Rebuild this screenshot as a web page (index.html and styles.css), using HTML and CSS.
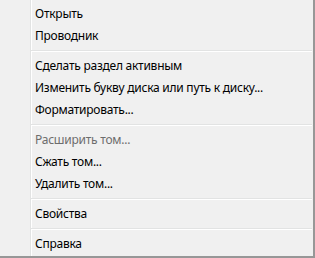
FILE: index.html
```html
<!DOCTYPE html>
<html lang="ru">
<head>
<meta charset="utf-8">
<link rel="stylesheet" href="styles.css">
</head>
<body>
<div class="menu">
  <div class="item">Открыть</div>
  <div class="item">Проводник</div>
  <div class="sep"></div>
  <div class="item">Сделать раздел активным</div>
  <div class="item">Изменить букву диска или путь к диску...</div>
  <div class="item">Форматировать...</div>
  <div class="sep"></div>
  <div class="item disabled">Расширить том...</div>
  <div class="item">Сжать том...</div>
  <div class="item">Удалить том...</div>
  <div class="sep"></div>
  <div class="item">Свойства</div>
  <div class="sep"></div>
  <div class="item">Справка</div>
</div>
</body>
</html>
```

FILE: styles.css
```css
html, body {
  margin: 0;
  padding: 0;
  background: #f0f0f0;
}
.menu {
  box-sizing: border-box;
  width: 315px;
  height: 258px;
  display: flex;
  flex-direction: column;
  padding-top: 3px;
  border-right: 2px solid #979797;
  border-bottom: 2px solid #979797;
  background: linear-gradient(to right, #f0f0f0 0 30px, #e2e3e3 30px 31px, #ffffff 31px 32px, #f0f0f0 32px);
  font-family: "Noto Sans", "Open Sans", sans-serif;
  font-size: 12px;
  letter-spacing: -0.25px;
  color: #000;
}
.item {
  height: 22px;
  line-height: 22px;
  padding-left: 35px;
  white-space: nowrap;
}
.item.disabled {
  color: #6d6d6d;
}
.sep {
  height: 8px;
  margin-left: 31px;
  margin-right: 1px;
  display: flex;
  flex-direction: column;
  justify-content: center;
}
.sep::after {
  content: "";
  display: block;
  border-top: 1px solid #e2e3e3;
  border-bottom: 1px solid #ffffff;
}
```
